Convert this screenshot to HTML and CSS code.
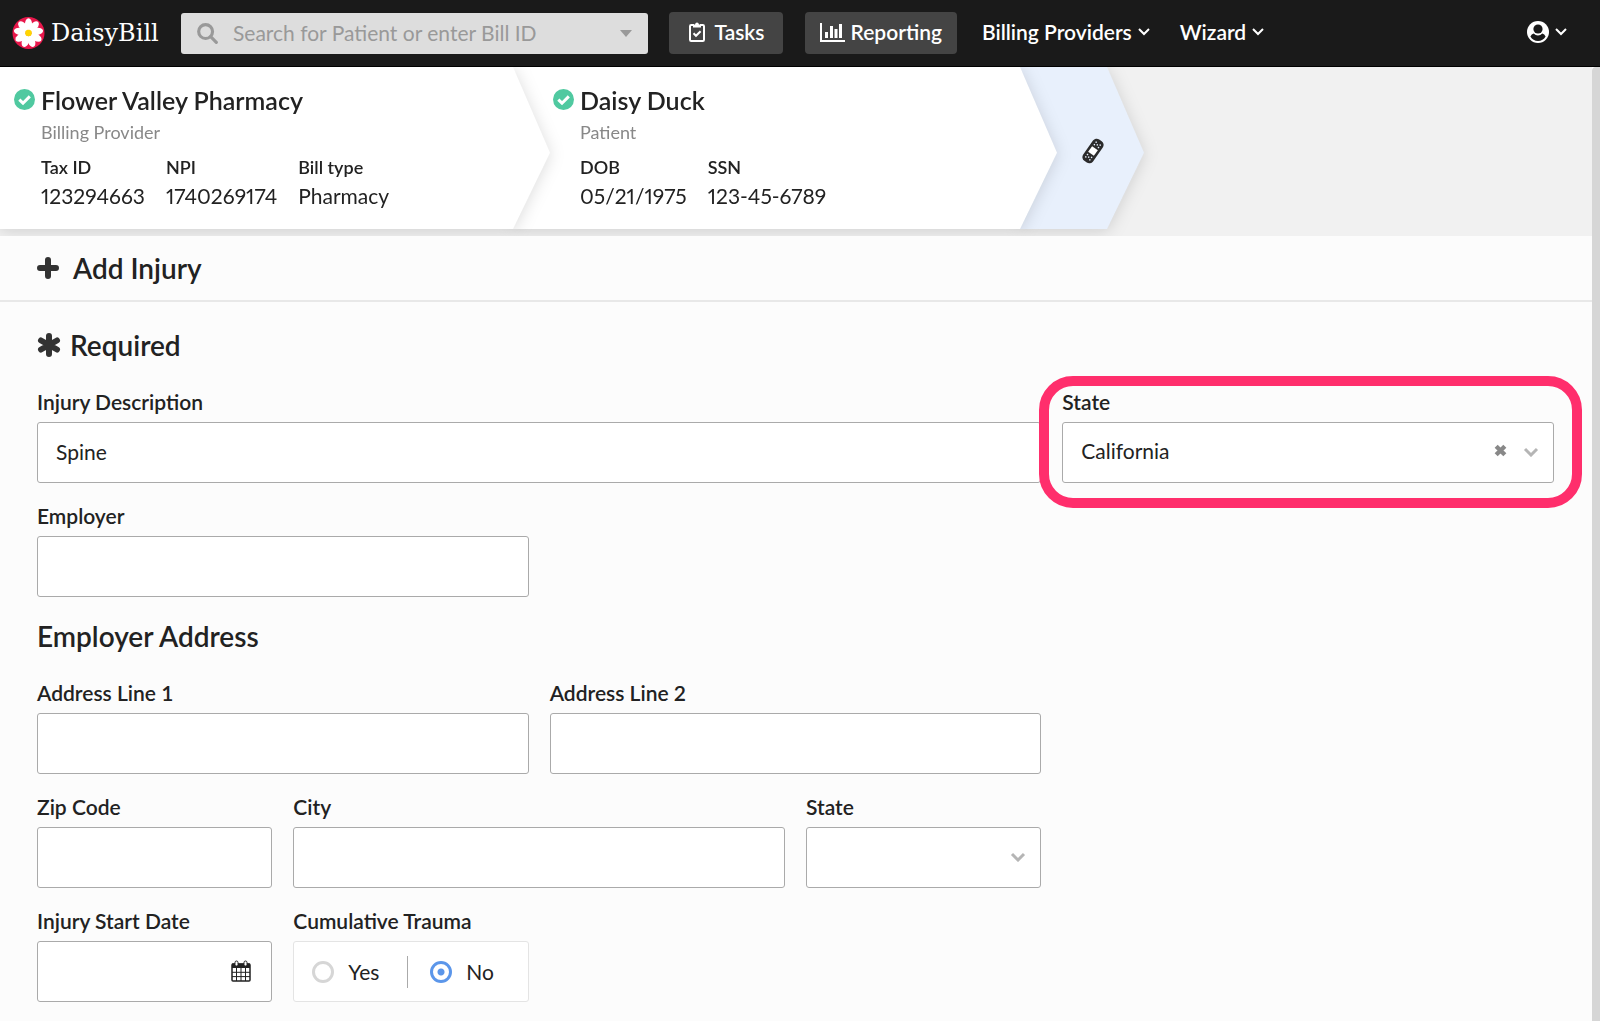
FILE: index.html
```html
<!DOCTYPE html>
<html lang="en">

<head>
    <meta charset="UTF-8">
    <meta name="viewport" content="width=device-width, initial-scale=1.0">
    <title>Add Injury - DaisyBill</title>
    <link rel="stylesheet" href="styles.css">
</head>

<body>
    <header class="topbar">
        <a class="logo" href="#">
            <svg class="logo-mark" viewBox="0 0 34 34" aria-hidden="true">
                <circle cx="17" cy="17" r="16.5" fill="#e8174b" />
                <g fill="#fff">
                    <ellipse id="petal" cx="17" cy="8" rx="3.7" ry="6.2" />
                    <use href="#petal" transform="rotate(40 17 17)" />
                    <use href="#petal" transform="rotate(80 17 17)" />
                    <use href="#petal" transform="rotate(120 17 17)" />
                    <use href="#petal" transform="rotate(160 17 17)" />
                    <use href="#petal" transform="rotate(200 17 17)" />
                    <use href="#petal" transform="rotate(240 17 17)" />
                    <use href="#petal" transform="rotate(280 17 17)" />
                    <use href="#petal" transform="rotate(320 17 17)" />
                </g>
                <circle cx="17" cy="17" r="3.4" fill="#ffd500" />
            </svg>
            <span class="logo-text">DaisyBill</span>
        </a>
        <form class="search" onsubmit="event.preventDefault()">
            <svg class="search-icon" viewBox="0 0 20 20" aria-hidden="true">
                <circle cx="8.2" cy="8.2" r="6.6" />
                <path d="M13 13l5.4 5.4" />
            </svg>
            <input class="search-input" type="text" placeholder="Search for Patient or enter Bill ID" aria-label="Search for Patient or enter Bill ID">
            <svg class="search-caret" viewBox="0 0 12 7" aria-hidden="true"><path d="M0 0h12L6 7z" /></svg>
        </form>
        <nav class="nav">
            <a class="nav-button tasks" href="#">
                <svg class="clip-icon" viewBox="0 0 16 20" aria-hidden="true">
                    <path d="M5 3H2.2Q1 3 1 4.200V17.800Q1 19 2.200 19H13.800Q15 19 15 17.800V4.200Q15 3 13.800 3H11" />
                    <path class="solid" d="M4 5.500V3.200Q4 2.400 5 2.400H6Q6.400.4 8 .4T10 2.400H11Q12 2.400 12 3.200V5.500z" />
                    <path d="M4.500 11.300l2.500 2.500 4.600-4.600" />
                </svg>
                Tasks
            </a>
            <a class="nav-button reporting" href="#">
                <svg class="chart-icon" viewBox="0 0 25 19" aria-hidden="true">
                    <path class="line" d="M1 0V18H25" />
                    <path d="M5 9h3v6H5zM10 3h3v12h-3zM14.500 6h3v9h-3zM19 1h3v14h-3z" />
                </svg>
                Reporting
            </a>
            <a class="nav-link" href="#">Billing Providers
                <svg class="chevron" viewBox="0 0 12 8" aria-hidden="true"><path d="M1 1l5 5 5-5" /></svg>
            </a>
            <a class="nav-link" href="#">Wizard
                <svg class="chevron" viewBox="0 0 12 8" aria-hidden="true"><path d="M1 1l5 5 5-5" /></svg>
            </a>
        </nav>
        <button class="account" type="button" aria-label="Account">
            <svg class="user-icon" viewBox="0 0 22 22" aria-hidden="true">
                <circle cx="11" cy="11" r="11" fill="#fff" />
                <circle cx="11" cy="8" r="4.600" fill="#1a1a1a" />
                <path d="M3.400 15.600Q4.500 13.300 6.700 12.600Q8.500 14.500 11 14.500T15.300 12.600Q17.500 13.300 18.600 15.600Q16 20 11 20T3.400 15.600z" fill="#1a1a1a" />
            </svg>
            <svg class="chevron" viewBox="0 0 12 8" aria-hidden="true"><path d="M1 1l5 5 5-5" /></svg>
        </button>
    </header>

    <div class="page">
        <main class="content">
            <ol class="steps">
                <li class="step provider">
                    <div class="step-panel">
                        <svg class="check-icon" viewBox="0 0 21 21" aria-hidden="true">
                            <circle cx="10.500" cy="10.500" r="10.500" />
                            <path d="M5.300 10.600l3.700 3.600 6.800-6.800" />
                        </svg>
                        <div class="step-body">
                            <h2 class="step-title">Flower Valley Pharmacy</h2>
                            <p class="step-role">Billing Provider</p>
                            <dl class="facts">
                                <div><dt>Tax ID</dt><dd>123294663</dd></div>
                                <div><dt>NPI</dt><dd>1740269174</dd></div>
                                <div><dt>Bill type</dt><dd>Pharmacy</dd></div>
                            </dl>
                        </div>
                    </div>
                </li>
                <li class="step patient">
                    <div class="step-panel">
                        <svg class="check-icon" viewBox="0 0 21 21" aria-hidden="true">
                            <circle cx="10.500" cy="10.500" r="10.500" />
                            <path d="M5.300 10.600l3.700 3.600 6.800-6.800" />
                        </svg>
                        <div class="step-body">
                            <h2 class="step-title">Daisy Duck</h2>
                            <p class="step-role">Patient</p>
                            <dl class="facts">
                                <div><dt>DOB</dt><dd>05/21/1975</dd></div>
                                <div><dt>SSN</dt><dd>123-45-6789</dd></div>
                            </dl>
                        </div>
                    </div>
                </li>
                <li class="step injury">
                    <div class="step-panel">
                        <svg class="bandage-icon" viewBox="0 0 28 28" aria-label="Injury">
                            <g transform="rotate(35 14 14)">
                                <rect x="8" y="1" width="12" height="26" rx="4.500" fill="#2b2b2b" />
                                <rect x="10.500" y="10.500" width="7" height="7" fill="#fff" />
                                <g fill="#e8f0fc">
                                    <circle cx="11.500" cy="5" r=".8" />
                                    <circle cx="16.500" cy="5" r=".8" />
                                    <circle cx="14" cy="6.500" r=".8" />
                                    <circle cx="11.500" cy="8" r=".8" />
                                    <circle cx="16.500" cy="8" r=".8" />
                                    <circle cx="11.500" cy="20" r=".8" />
                                    <circle cx="16.500" cy="20" r=".8" />
                                    <circle cx="14" cy="21.500" r=".8" />
                                    <circle cx="11.500" cy="23" r=".8" />
                                    <circle cx="16.500" cy="23" r=".8" />
                                </g>
                            </g>
                        </svg>
                    </div>
                </li>
            </ol>

            <div class="title-row">
                <svg class="plus-icon" viewBox="0 0 22 22" aria-hidden="true"><path d="M11 3v16M3 11h16" /></svg>
                <h1 class="heading">Add Injury</h1>
            </div>

            <form class="injury-form" onsubmit="event.preventDefault()">
                <div class="section-title">
                    <svg class="asterisk-icon" viewBox="0 0 24 24" aria-hidden="true"><path d="M12 3v18M4 7.500l16 9M20 7.500l-16 9" /></svg>
                    <h2 class="heading">Required</h2>
                </div>
                <div class="grid">
                    <div class="field span-4">
                        <label for="description">Injury Description</label>
                        <input class="control" type="text" id="description" value="Spine">
                    </div>
                    <div class="field span-2 highlighted">
                        <label for="injuryState">State</label>
                        <div class="select-wrap">
                            <select class="control" id="injuryState">
                                <option></option>
                                <option selected>California</option>
                            </select>
                            <button class="clear" type="button" aria-label="Clear state" onclick="clearState()">
                                <svg viewBox="0 0 12 12" aria-hidden="true"><path d="M2 2l8 8M10 2l-8 8" /></svg>
                            </button>
                            <svg class="select-arrow" viewBox="0 0 16 10" aria-hidden="true"><path d="M2 2l6 6 6-6" /></svg>
                        </div>
                    </div>
                    <div class="field span-2">
                        <label for="employer">Employer</label>
                        <input class="control" type="text" id="employer">
                    </div>
                </div>

                <h2 class="heading address-title">Employer Address</h2>
                <div class="grid">
                    <div class="field span-2">
                        <label for="address1">Address Line 1</label>
                        <input class="control" type="text" id="address1">
                    </div>
                    <div class="field span-2">
                        <label for="address2">Address Line 2</label>
                        <input class="control" type="text" id="address2">
                    </div>
                    <div class="field row-start">
                        <label for="zip">Zip Code</label>
                        <input class="control" type="text" id="zip">
                    </div>
                    <div class="field span-2">
                        <label for="city">City</label>
                        <input class="control" type="text" id="city">
                    </div>
                    <div class="field">
                        <label for="state">State</label>
                        <div class="select-wrap">
                            <select class="control" id="state">
                                <option></option>
                                <option>California</option>
                            </select>
                            <svg class="select-arrow" viewBox="0 0 16 10" aria-hidden="true"><path d="M2 2l6 6 6-6" /></svg>
                        </div>
                    </div>
                    <div class="field row-start">
                        <label for="startDate">Injury Start Date</label>
                        <div class="select-wrap">
                            <input class="control" type="text" id="startDate">
                            <svg class="calendar-icon" viewBox="0 0 20 22" aria-hidden="true">
                                <rect x="1" y="4" width="18" height="17" rx="1" fill="#fff" stroke="#222" stroke-width="1.500" />
                                <path d="M1 3.500h18V8H1z" fill="#222" />
                                <path d="M5.500 8v13M10 8v13M14.500 8v13M1 12.300h18M1 16.600h18" stroke="#222" fill="none" />
                                <rect x="4" y="1" width="3" height="5" rx="1.500" fill="#fff" stroke="#222" />
                                <rect x="13" y="1" width="3" height="5" rx="1.500" fill="#fff" stroke="#222" />
                            </svg>
                        </div>
                    </div>
                    <div class="field">
                        <span class="label" id="traumaLabel">Cumulative Trauma</span>
                        <div class="radios" role="radiogroup" aria-labelledby="traumaLabel">
                            <label class="radio"><input type="radio" name="trauma" value="yes">Yes</label>
                            <label class="radio"><input type="radio" name="trauma" value="no" checked>No</label>
                        </div>
                    </div>
                </div>
            </form>
        </main>
        <div class="scroll-track"></div>
    </div>

    <script>
        function clearState() {
            document.getElementById('injuryState').selectedIndex = 0;
        }
    </script>
</body>

</html>
```
FILE: styles.css
```css
* {
    box-sizing: border-box;
}

body {
    margin: 0;
    min-height: 100vh;
    display: flex;
    flex-direction: column;
    overflow: hidden;
    background-color: #fcfcfc;
    color: #222;
    font-family: Lato, "Liberation Sans", sans-serif;
    font-size: 21px;
    line-height: 24px;
}

h1, h2, p, ol, dl, dd {
    margin: 0;
    padding: 0;
}

svg {
    display: block;
    flex: none;
}

button, input, select {
    font: inherit;
    color: inherit;
}

/* top bar */
.topbar {
    display: flex;
    align-items: center;
    height: 67px;
    padding: 0 33px 0 12px;
    background-color: #1a1a1a;
    border-bottom: 1px solid #000;
    position: relative;
    z-index: 5;
}

.logo {
    display: flex;
    align-items: center;
    gap: 6px;
    width: 169px;
    color: #fff;
    text-decoration: none;
}

.logo-mark {
    width: 33px;
    height: 34px;
}

.logo-text {
    font-family: "DejaVu Serif", serif;
    font-size: 24px;
}

.search {
    display: flex;
    align-items: center;
    width: 30%;
    height: 41px;
    padding: 0 16px;
    background-color: #ddd;
    border-radius: 3px;
}

.search-icon {
    width: 21px;
    height: 21px;
    fill: none;
    stroke: #999;
    stroke-width: 3;
    stroke-linecap: round;
}

.search-input {
    flex: 1;
    min-width: 0;
    padding: 0 0 0 15px;
    border: none;
    outline: none;
    background: transparent;
}

.search-input::placeholder {
    color: #999;
    opacity: 1;
}

.search-caret {
    width: 12px;
    height: 7px;
    fill: #999;
}

.nav {
    display: flex;
    align-items: center;
    flex: 1;
    margin-left: 21px;
}

.nav a {
    display: flex;
    align-items: center;
    padding-bottom: 2px;
    color: #fff;
    font-weight: 600;
    text-decoration: none;
    white-space: nowrap;
}

.nav-button {
    height: 42px;
    border-radius: 4px;
    background-color: #444;
    margin-right: 22px;
}

.nav .tasks {
    gap: 10px;
    padding-left: 20px;
    padding-right: 18px;
}

.nav .reporting {
    gap: 6px;
    padding-left: 15px;
    padding-right: 15px;
}

.nav .nav-link {
    gap: 6px;
    margin-left: 3px;
    margin-right: 27px;
}

.clip-icon {
    width: 16px;
    height: 20px;
    fill: none;
    stroke: #fff;
    stroke-width: 2;
}

.clip-icon .solid {
    fill: #fff;
    stroke: none;
}

.chart-icon {
    width: 25px;
    height: 19px;
    fill: #fff;
}

.chart-icon .line {
    fill: none;
    stroke: #fff;
    stroke-width: 2;
}

.chevron {
    width: 12px;
    height: 8px;
    fill: none;
    stroke: #fff;
    stroke-width: 2;
}

.account {
    display: flex;
    align-items: center;
    gap: 6px;
    padding: 0 0 2px;
    border: none;
    background: none;
    cursor: pointer;
}

.user-icon {
    width: 22px;
    height: 22px;
}

/* page */
.page {
    display: flex;
    flex: 1;
}

.content {
    flex: 1;
    min-width: 0;
}

.scroll-track {
    width: 8px;
    background-color: #d6d6d6;
    border-radius: 4px 0 0 0;
}

/* steps */
.steps {
    display: flex;
    height: 169px;
    padding-bottom: 7px;
    overflow: hidden;
    list-style: none;
    background-color: #f1f1f1;
}

.step {
    position: relative;
    filter: drop-shadow(0 2px 8px rgba(0, 0, 0, 0.14));
}

.step-panel {
    display: flex;
    gap: 6px;
    height: 100%;
    background-color: #fff;
    clip-path: polygon(0 0, calc(100% - 37px) 0, 100% 53%, calc(100% - 37px) 100%, 0 100%);
}

.step + .step {
    margin-left: -37px;
}

.provider {
    width: 35%;
    max-width: 550px;
    z-index: 3;
}

.provider .step-panel {
    padding: 18px 37px 0 14px;
}

.patient {
    width: 35%;
    max-width: 544px;
    z-index: 2;
}

.patient .step-panel {
    padding: 18px 37px 0 40px;
}

.injury {
    width: 124px;
    z-index: 1;
}

.injury .step-panel {
    align-items: center;
    justify-content: center;
    padding: 5px 0 0 22px;
    background-color: #e8f0fc;
}

.check-icon {
    width: 21px;
    height: 21px;
    margin-top: 4px;
    fill: #50c9a0;
}

.check-icon path {
    fill: none;
    stroke: #fff;
    stroke-width: 3;
}

.step-title {
    font-size: 25px;
    font-weight: 600;
    line-height: 30px;
}

.step-role {
    margin-top: 5px;
    color: #888;
    font-size: 18px;
}

.facts {
    display: flex;
    gap: 21px;
    margin-top: 9px;
}

.facts dt {
    font-size: 18px;
    font-weight: 600;
    line-height: 28px;
}

.facts dd {
    font-variant-numeric: proportional-nums;
    line-height: 30px;
}

.bandage-icon {
    width: 28px;
    height: 28px;
}

/* headings */
.heading {
    font-size: 28px;
    font-weight: 600;
    line-height: 32px;
}

.title-row {
    display: flex;
    align-items: center;
    gap: 14px;
    height: 66px;
    padding: 0 37px;
    border-bottom: 2px solid #e8e8e8;
}

.plus-icon {
    width: 22px;
    height: 22px;
    fill: none;
    stroke: #333;
    stroke-width: 6;
    stroke-linecap: round;
}

.section-title {
    display: flex;
    align-items: center;
    gap: 9px;
    margin-bottom: 30px;
}

.asterisk-icon {
    width: 24px;
    height: 24px;
    fill: none;
    stroke: #333;
    stroke-width: 6;
    stroke-linecap: round;
}

.address-title {
    margin: 23px 0 30px;
}

/* form */
.injury-form {
    padding: 27px 38px 18px 37px;
}

.grid {
    display: grid;
    grid-template-columns: repeat(6, minmax(0, 1fr));
    gap: 22px 21px;
}

.span-2 {
    grid-column-end: span 2;
}

.span-4 {
    grid-column-end: span 4;
}

.row-start {
    grid-column-start: 1;
}

.field > label,
.label {
    display: block;
    margin-bottom: 9px;
    font-weight: 600;
    line-height: 22px;
}

.control {
    display: block;
    width: 100%;
    height: 61px;
    padding: 0 18px 2px;
    border: 1px solid #aaa;
    border-radius: 3px;
    background-color: #fff;
    appearance: none;
}

select.control {
    padding-bottom: 4px;
}

.select-wrap {
    position: relative;
}

.select-arrow {
    position: absolute;
    right: 15px;
    top: 25px;
    width: 16px;
    height: 10px;
    fill: none;
    stroke: #b5b5b5;
    stroke-width: 3;
    pointer-events: none;
}

.clear {
    position: absolute;
    right: 47px;
    top: 22px;
    width: 13px;
    height: 13px;
    padding: 0;
    border: none;
    background: none;
    cursor: pointer;
}

.clear svg {
    fill: none;
    stroke: #888;
    stroke-width: 4;
}

.calendar-icon {
    position: absolute;
    right: 21px;
    top: 19px;
    width: 20px;
    height: 22px;
    pointer-events: none;
}

.highlighted {
    position: relative;
}

.highlighted::after {
    content: "";
    position: absolute;
    inset: -15px -28px -25px -23px;
    border: 10px solid #ff2e6c;
    border-radius: 34px;
    pointer-events: none;
}

.radios {
    display: flex;
    align-items: center;
    height: 61px;
    padding-left: 18px;
    border: 1px solid #e4e4e4;
    border-radius: 3px;
    background-color: #fff;
}

.radio {
    display: flex;
    align-items: center;
    gap: 14px;
}

.radio + .radio {
    height: 32px;
    margin-left: 28px;
    padding-left: 22px;
    border-left: 1px solid #aaa;
}

.radio input {
    width: 22px;
    height: 22px;
    margin: 0;
    border: 3px solid #d6d6d6;
    border-radius: 50%;
    appearance: none;
}

.radio input:checked {
    border-color: #5b96ea;
    background: radial-gradient(#5b96ea 3px, #fff 4px);
}
```
